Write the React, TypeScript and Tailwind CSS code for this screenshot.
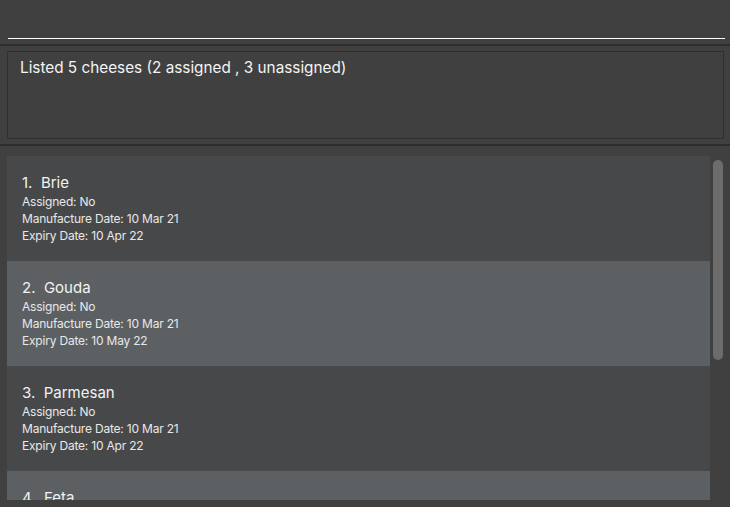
import React from 'react';

interface Cheese {
  name: string;
  assigned: string;
  manufactured: string;
  expiry: string;
}

const cheeses: Cheese[] = [
  { name: 'Brie', assigned: 'No', manufactured: '10 Mar 21', expiry: '10 Apr 22' },
  { name: 'Gouda', assigned: 'No', manufactured: '10 Mar 21', expiry: '10 May 22' },
  { name: 'Parmesan', assigned: 'No', manufactured: '10 Mar 21', expiry: '10 Apr 22' },
  { name: 'Feta', assigned: 'Yes', manufactured: '10 Mar 21', expiry: '10 Apr 22' },
  { name: 'Cheddar', assigned: 'Yes', manufactured: '10 Mar 21', expiry: '10 Apr 22' },
];

const CheeseCard = ({ cheese, index }: { cheese: Cheese; index: number }) => {
  const odd = index % 2 === 1;
  return (
    <div
      className={`h-[105px] shrink-0 pl-[15px] pt-[17px] ${odd ? 'bg-[#5c6063]' : 'bg-[#47484a]'}`}
    >
      <div className="text-[15px] leading-[20px] text-[#f2f2f2]">
        {index + 1}.&nbsp; {cheese.name}
      </div>
      <div className="text-[12px] leading-[17px] text-[#e8e8e8] tracking-[-0.2px]">
        <div>Assigned: {cheese.assigned}</div>
        <div>Manufacture Date: {cheese.manufactured}</div>
        <div>Expiry Date: {cheese.expiry}</div>
      </div>
    </div>
  );
};

export default function App() {
  return (
    <div
      className="w-[730px] h-[507px] bg-[#404040] flex flex-col overflow-hidden"
      style={{ fontFamily: 'Inter, "Open Sans", sans-serif' }}
    >
      {/* command box */}
      <div className="h-[44px] pl-[8px] pr-[5px]">
        <div className="h-[39px] border-b border-white" />
      </div>
      <div className="h-[2px] bg-[#2d2d2d]" />

      {/* result display */}
      <div className="pl-[7px] pr-[6px] py-[5px]">
        <div className="h-[88px] border border-[#2f2f2f] px-[12px] pt-[6px] text-[15.3px] leading-[20px] text-[#f4f4f4]">
          Listed 5 cheeses (2 assigned , 3 unassigned)
        </div>
      </div>
      <div className="h-[2px] bg-[#2d2d2d]" />

      {/* cheese list */}
      <div className="flex flex-row pl-[7px] pt-[10px] h-[354px]">
        <div className="w-[703px] h-[344px] overflow-hidden flex flex-col">
          {cheeses.map((c, i) => (
            <CheeseCard key={c.name} cheese={c} index={i} />
          ))}
        </div>
        <div className="ml-[3px] w-[10px] pt-[4px]">
          <div className="h-[200px] w-[10px] rounded-[5px] bg-[#6c6c6c]" />
        </div>
      </div>
    </div>
  );
}
